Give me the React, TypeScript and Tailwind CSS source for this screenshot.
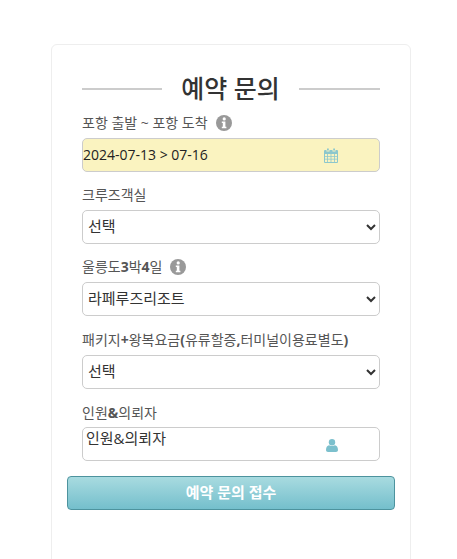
import React from "react";

const font = { fontFamily: '"Open Sans", "Noto Sans CJK KR", sans-serif' };

function Info() {
  return (
    <svg viewBox="0 0 16 16" className="h-4 w-4 shrink-0" aria-hidden="true">
      <circle cx="8" cy="8" r="8" fill="#999999" />
      <circle cx="8.2" cy="3.9" r="1.6" fill="#fff" />
      <path d="M5.8 6.6h3.6v5.2h1v1.500H5.8v-1.500h1V8.100h-1z" fill="#fff" />
    </svg>
  );
}

function Label({ text, info }: { text: string; info?: boolean }) {
  const parts = text.split(/([^\uac00-\ud7a3 ~]+)/);
  return (
    <div className="flex h-[20px] items-center gap-2 text-[14px] leading-[20px] text-[#555555]">
      <span>
        {parts.map((p, i) =>
          i % 2 === 1 ? (
            <span key={i} className="font-bold">
              {p}
            </span>
          ) : (
            <span key={i}>{p}</span>
          ),
        )}
      </span>
      {info && <Info />}
    </div>
  );
}

function Select({ value }: { value: string }) {
  return (
    <select
      defaultValue={value}
      className="mt-[5px] block h-[34px] w-full rounded-[5px] border border-[#cccccc] bg-white pb-[2px] pl-[1px] text-[15px] text-[#333333] outline-none"
    >
      <option>{value}</option>
    </select>
  );
}

export default function App() {
  return (
    <div className="h-[559px] overflow-hidden bg-white pl-[51px] pt-[44px]" style={font}>
      <div className="h-[530px] w-[360px] rounded-[6px] border border-[#eeeeee] bg-white px-[30px]">
        <div className="mt-[26px] flex h-[36px] items-center justify-between">
          <div className="h-[2px] w-[80px] bg-[#cccccc]" />
          <h1 className="pb-[2px] text-[25px] font-medium leading-[34px] text-[#333333]">예약 문의</h1>
          <div className="h-[2px] w-[81px] bg-[#cccccc]" />
        </div>

        <div className="mt-[6px]">
          <Label text="포항 출발 ~ 포항 도착" info />
          <div className="mt-[5px] flex h-[34px] items-center justify-between rounded-[5px] border border-[#cccccc] bg-[#faf3c0] pr-[41px] text-[14px] text-[#222222]">
            <span className="pb-[2px]">2024-07-13 &gt; 07-16</span>
            <svg viewBox="0 0 14 15" className="h-[15px] w-[14px]" aria-hidden="true">
              <path d="M3 0.500h1.800v2H3zM9.200 0.500H11v2H9.200z" fill="#8cc7cd" />
              <path fillRule="evenodd" d="M1 2h1.500v1.500h3V2h3v1.500h3V2H13a1 1 0 0 1 1 1v11a1 1 0 0 1-1 1H1a1 1 0 0 1-1-1V3a1 1 0 0 1 1-1zM1 6v2h2.200V6zM4 6v2h2.600V6zM7.400 6v2H10V6zM10.800 6v2H13V6zM1 8.800v2h2.200v-2zM4 8.800v2h2.600v-2zM7.400 8.800v2H10v-2zM10.800 8.800v2H13v-2zM1 11.600V14h2.200v-2.400zM4 11.600V14h2.600v-2.400zM7.400 11.600V14H10v-2.400zM10.800 11.600V14H13v-2.400z" fill="#8cc7cd" />
            </svg>
          </div>
        </div>

        <div className="mt-[13px]">
          <Label text="크루즈객실" />
          <Select value="선택" />
        </div>

        <div className="mt-[13px]">
          <Label text="울릉도3박4일" info />
          <Select value="라페루즈리조트" />
        </div>

        <div className="mt-[14px]">
          <Label text="패키지+왕복요금(유류할증,터미널이용료별도)" />
          <Select value="선택" />
        </div>

        <div className="mt-[14px]">
          <Label text="인원&의뢰자" />
          <div className="mt-[4px] flex h-[34px] justify-between rounded-[5px] border border-[#cccccc] bg-white pl-[3px] pr-[41px] text-[15px] leading-[20px] text-[#333333]">
            <span>인원&amp;의뢰자</span>
            <svg viewBox="0 0 12 13" className="mt-[11px] h-[13px] w-[12px]" aria-hidden="true">
              <circle cx="6" cy="3.200" r="3.200" fill="#7cc0cd" />
              <path d="M0 11c0-3 1.500-4.600 3-4.800 1.800 1 4.200 1 6 0 1.500.2 3 1.800 3 4.800 0 1.300-.8 2-2 2H2c-1.200 0-2-.7-2-2z" fill="#7cc0cd" />
            </svg>
          </div>
        </div>

        <button
          type="button"
          className="-mx-[15px] mt-[15px] block h-[34px] w-[328px] rounded-[4px] border border-[#4d939e] bg-gradient-to-b from-[#a8dbe0] to-[#74bfcc] pb-[2px] text-[15px] font-bold text-white"
        >
          예약 문의 접수
        </button>
      </div>
    </div>
  );
}
